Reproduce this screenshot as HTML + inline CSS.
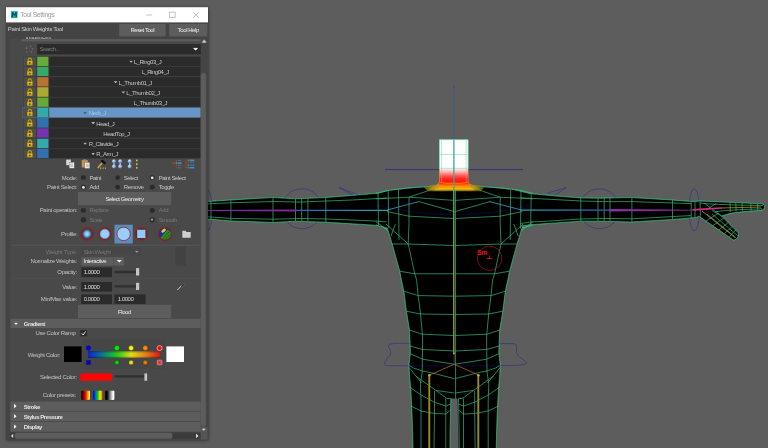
<!DOCTYPE html>
<html>
<head>
<meta charset="utf-8">
<title>Tool Settings</title>
<style>
*{box-sizing:border-box;margin:0;padding:0}
html,body{width:768px;height:448px;overflow:hidden;background:#5d5d5d}
body{position:relative;font-family:"Liberation Sans",sans-serif;font-size:6px;letter-spacing:-.45px;color:#c4c4c4;line-height:1}
.a{position:absolute}
#vp{position:absolute;left:0;top:0;width:768px;height:448px}
#win{overflow:hidden;position:absolute;left:6px;top:7px;width:201.8px;height:432.6px;background:#444;box-shadow:0 0 3px .5px rgba(0,0,0,.5)}
#title{position:absolute;left:0;top:0;width:201.8px;height:15.4px;background:#fff}
#title .t{position:absolute;left:14.2px;top:4.7px;font-size:6.9px;letter-spacing:-.42px;color:#9c9c9c;white-space:nowrap}
.btn{position:absolute;background:#5d5d5d;color:#eee;text-align:center;white-space:nowrap}
.lbl{margin-top:-.4px;position:absolute;white-space:nowrap;text-align:right;color:#c4c4c4;letter-spacing:-.3px}
.txt{margin-top:-.4px;position:absolute;white-space:nowrap;color:#c6c6c6}
.dis{color:#777}
.fld{position:absolute;background:#2b2b2b;color:#ddd;white-space:nowrap;padding-left:2.4px}
.row{position:absolute;left:23.25px;width:177.25px;height:9.3px}
.row .lk{position:absolute;left:.2px;top:0;width:12.5px;height:9.3px;background:#4d4d4d}
.row .sw{position:absolute;left:13.75px;top:0;width:11.5px;height:9.3px}
.row .nm{position:absolute;left:25.75px;top:0;width:151.5px;height:9.3px;background:#2b2b2b}
.row .tx{position:absolute;top:2.3px;white-space:nowrap;color:#c6c6c6}
.row.sel .nm{background:#6795c5}.row.sel{outline:.7px solid #6b9bd0;outline-offset:.1px}.row.sel .tx{color:#a9c2e4}.row.sel .tri{background:#47607e}
.tri{position:absolute;width:4px;height:2.4px;background:#b4b4b4;clip-path:polygon(0 0,100% 0,50% 100%)}
.rad{position:absolute;width:5px;height:5px;margin:-.2px 0 0 -.2px;border-radius:50%;background:#2b2b2b}
.rad.on::after,.rad.half::after{content:"";position:absolute;left:1.1px;top:1.1px;width:2.8px;height:2.8px;border-radius:50%;background:#ececec}.rad.half::after{background:#9a9a9a;left:1.3px;top:1.3px;width:2.4px;height:2.4px}
.hdr{position:absolute;left:10.3px;width:190.4px;background:#5d5d5d;color:#e4e4e4;font-weight:bold}
.hdr span{position:absolute;left:13.5px;top:1.9px;white-space:nowrap}
.groove{position:absolute;height:2.6px;background:#303030;border-radius:1px}
.hand{position:absolute;width:3.2px;height:7.4px;background:#c4c4c4;border-radius:.5px}
</style>
</head>
<body>
<svg id="vp" viewBox="0 0 768 448">
<defs>
<linearGradient id="neck" x1="0" x2="0" y1="139.75" y2="182" gradientUnits="userSpaceOnUse"><stop offset="0" stop-color="#fff"/><stop offset=".66" stop-color="#fff"/><stop offset=".76" stop-color="#ffb4b4"/><stop offset=".85" stop-color="#ff5a5a"/><stop offset=".93" stop-color="#ff2020"/><stop offset="1" stop-color="#ff1a08"/></linearGradient>
<linearGradient id="spine" x1="0" x2="0" y1="190" y2="353" gradientUnits="userSpaceOnUse"><stop offset="0" stop-color="#4cb070"/><stop offset=".2" stop-color="#86ac30"/><stop offset=".5" stop-color="#a8a224"/><stop offset="1" stop-color="#a89c24"/></linearGradient>
<linearGradient id="fan" x1="0" x2="0" y1="181.5" y2="192" gradientUnits="userSpaceOnUse"><stop offset="0" stop-color="#ff1a08"/><stop offset=".25" stop-color="#ff4a00"/><stop offset=".5" stop-color="#ff9000"/><stop offset=".72" stop-color="#f0c000"/><stop offset=".9" stop-color="#806400"/><stop offset="1" stop-color="#000"/></linearGradient>
<linearGradient id="fanh" x1="424" x2="484" y1="0" y2="0" gradientUnits="userSpaceOnUse"><stop offset="0" stop-color="#000" stop-opacity=".65"/><stop offset=".2" stop-color="#000" stop-opacity="0"/><stop offset=".8" stop-color="#000" stop-opacity="0"/><stop offset="1" stop-color="#000" stop-opacity=".65"/></linearGradient>
<linearGradient id="armL" x1="296" x2="388" y1="0" y2="0" gradientUnits="userSpaceOnUse"><stop offset="0" stop-color="#3060c0"/><stop offset="1" stop-color="#30a0a8"/></linearGradient>
<linearGradient id="armR" x1="609" x2="521" y1="0" y2="0" gradientUnits="userSpaceOnUse"><stop offset="0" stop-color="#3060c0"/><stop offset="1" stop-color="#30a0a8"/></linearGradient>
</defs>
<!--FIGSTART-->
<path d="M376.0 225.0 L387.2 228.0 L392.2 244.0 L399.8 271.5 L401.4 280.0 L403.9 291.2 L406.4 311.2 L409.5 330.0 L410.4 352.0 L409.0 365.0 L409.5 376.0 L410.8 388.5 L412.0 413.5 L412.6 432.0 L413.0 448.0 M533.2 225.0 L522.0 228.0 L517.0 244.0 L509.5 271.5 L507.8 280.0 L505.3 291.2 L502.8 311.2 L499.7 330.0 L498.8 352.0 L500.2 365.0 L499.7 376.0 L498.5 388.5 L497.2 413.5 L496.6 432.0 L496.2 448.0 M409.0 197.2 L409.0 224.0 L408.2 244.0 L414.8 274.0 L416.6 280.0 L418.2 295.6 L420.5 314.0 L422.6 336.0 L422.5 349.0 L422.2 372.0 L420.4 384.0 L421.0 400.0 L421.0 448.0 M500.2 197.2 L500.2 224.0 L501.0 244.0 L494.5 274.0 L492.6 280.0 L491.0 295.6 L488.7 314.0 L486.6 336.0 L486.7 349.0 L487.0 372.0 L488.8 384.0 L488.2 400.0 L488.2 448.0 M392.2 244.0 L408.2 244.0 L454.2 245.5 M517.0 244.0 L501.0 244.0 L455.0 245.5 M399.8 271.2 L414.8 273.8 L454.2 273.8 M509.5 271.2 L494.5 273.8 L455.0 273.8 M403.9 291.2 L418.2 295.6 L454.2 296.2 M505.3 291.2 L491.0 295.6 L455.0 296.2 M406.4 311.2 L420.5 314.0 L454.2 314.5 M502.8 311.2 L488.7 314.0 L455.0 314.5 M409.5 330.0 L422.0 334.2 L454.2 335.5 M499.7 330.0 L487.2 334.2 L455.0 335.5 M410.0 346.0 L422.5 349.5 L454.2 351.0 M499.2 346.0 L486.7 349.5 L455.0 351.0 M410.0 353.6 L422.5 359.2 L454.2 364.2 M499.2 353.6 L486.7 359.2 L455.0 364.2 M409.5 365.5 L413.5 368.0 L422.2 371.0 L429.8 372.4 L454.2 378.6 M499.7 365.5 L495.7 368.0 L487.0 371.0 L479.5 372.4 L455.0 378.6 M409.5 368.0 L421.6 383.0 M499.7 368.0 L487.6 383.0 M386.0 224.0 L408.2 244.0 M523.2 224.0 L501.0 244.0 M395.4 224.0 L391.0 236.0 M513.8 224.0 L518.2 236.0 M376.0 198.8 L409.0 197.2 L454.2 200.4 M533.2 198.8 L500.2 197.2 L455.0 200.4 M409.0 197.2 L438.5 187.2 M500.2 197.2 L470.7 187.2 M419.0 201.6 L454.2 211.6 M490.2 201.6 L455.0 211.6 M387.0 211.6 L409.0 216.2 L454.2 218.5 M522.2 211.6 L500.2 216.2 L455.0 218.5 M376.0 221.6 L388.5 231.0 M533.2 221.6 L520.7 231.0 M378.0 193.3 L378.5 225.2 M531.2 193.3 L530.7 225.2 M388.2 190.6 L388.8 228.5 M521.0 190.6 L520.5 228.5 M398.5 189.4 L399.0 240.0 M510.7 189.4 L510.2 240.0 M376.0 193.5 L388.5 190.4 L408.5 187.9 L423.5 187.0 L438.0 185.4 M533.2 193.5 L520.7 190.4 L500.7 187.9 L485.7 187.0 L471.2 185.4 M409.5 387.0 L421.0 395.0 L434.0 402.0 L445.8 406.0 L450.8 404.0 M499.7 387.0 L488.2 395.0 L475.2 402.0 L463.5 406.0 L458.5 404.0 M410.8 406.0 L421.0 411.0 L434.5 413.5 L445.8 414.0 L450.5 410.0 M498.5 406.0 L488.2 411.0 L474.7 413.5 L463.5 414.0 L458.7 410.0 M415.8 376.0 L421.0 379.8 L435.8 390.4 L454.2 393.0 M493.5 376.0 L488.2 379.8 L473.5 390.4 L455.0 393.0 M435.8 390.4 L447.0 398.5 L450.8 398.5 M473.5 390.4 L462.2 398.5 L458.5 398.5 M434.5 391.0 L434.5 413.5 L434.0 448.0 M474.7 391.0 L474.7 413.5 L475.2 448.0 M445.8 398.5 L445.8 448.0 M463.5 398.5 L463.5 448.0 M450.8 398.5 L450.1 432.0 L450.0 448.0 M458.5 398.5 L459.1 432.0 L459.2 448.0 M455.5 190.0 L455.6 398.5 M208.0 201.5 L230.5 200.0 L273.0 197.5 L295.5 198.8 L326.0 197.5 L352.2 195.4 L377.9 193.2 L388.5 190.4 M208.0 219.0 L230.5 220.9 L273.0 222.5 L295.5 221.2 L326.0 222.2 L352.2 223.8 L377.9 225.4 M208.0 203.8 L230.5 202.8 L273.0 201.5 L295.5 202.0 L301.6 202.0 L326.0 201.0 L352.2 200.0 L377.9 198.5 L386.6 198.0 M208.0 216.8 L230.5 218.4 L273.0 219.2 L295.5 218.6 L301.6 218.5 L326.0 219.0 L352.2 220.0 L377.9 221.2 L386.6 222.0 M211.0 201.3 L211.0 219.3 M230.9 200.0 L230.9 220.9 M273.0 197.5 L273.0 222.5 M295.5 198.8 L295.5 221.2 M301.7 198.5 L301.7 221.5 M307.9 198.2 L307.9 221.7 M325.8 197.5 L325.8 222.2 M512.0 189.1 L519.5 191.0 L529.5 193.5 L555.8 196.0 L580.8 197.9 L600.0 198.2 L631.2 197.5 L671.9 200.0 L690.6 201.4 L696.0 201.5 M521.4 226.0 L529.5 224.8 L555.8 222.9 L580.8 221.2 L600.0 221.2 L631.2 222.0 L671.9 219.5 L690.6 217.9 L696.0 217.5 M520.8 198.0 L529.5 198.2 L555.8 199.6 L580.8 201.0 L604.0 201.6 L632.0 201.6 L672.0 202.9 L691.0 203.6 M520.8 223.5 L529.5 222.2 L555.8 220.6 L580.8 219.0 L604.0 218.5 L632.0 218.8 L672.0 216.6 L691.0 215.6 M580.8 197.9 L580.8 221.2 M598.0 198.2 L598.0 221.2 M604.2 198.1 L604.2 221.4 M610.0 198.0 L610.0 221.5 M631.9 197.5 L631.9 222.0 M672.5 200.0 L672.5 219.4 M691.2 201.4 L691.2 217.9 M695.0 201.5 L695.0 217.6 M696.0 201.5 L699.5 201.0 L728.0 202.2 L761.5 203.8 L763.6 204.4 L764.4 205.6 L764.4 208.0 L763.4 209.6 L761.0 210.3 L744.0 211.6 L734.8 212.6 L728.5 213.8 L721.6 216.0 M700.0 203.0 L709.5 204.0 L735.0 205.0 L763.0 205.6 M716.0 211.6 L726.0 210.6 L737.0 209.8 L762.0 208.8 M696.0 217.5 L699.0 216.2 L733.4 240.0 L736.0 239.4 L738.0 237.0 L738.4 233.0 L721.6 216.0 L712.0 210.5 M707.0 214.0 L736.0 237.8 M712.0 214.0 L737.6 235.6 M700.0 201.0 L700.4 216.6 M730.0 202.3 L730.4 211.9 M735.8 202.6 L736.1 211.6 M742.0 202.9 L742.4 211.3 M750.8 203.3 L751.1 210.9 M757.5 203.6 L757.9 210.5 M705.9 221.0 L718.9 213.0 M712.7 225.8 L723.8 218.0 M718.9 230.0 L728.2 222.5 M724.3 233.8 L732.1 226.5 M729.1 237.2 L735.5 230.0 M704.0 203.0 L721.6 216.0 M706.0 210.0 L716.0 203.5" fill="none" stroke="#35b478" stroke-width=".72" stroke-linejoin="round"/>
<circle cx="302" cy="208.75" r="20" stroke="#2e2e86" stroke-width=".6" fill="none"/>
<circle cx="599.5" cy="208.75" r="20" stroke="#2e2e86" stroke-width=".6" fill="none"/>
<ellipse cx="694.25" cy="209.75" rx="5.25" ry="21" stroke="#2e2e86" stroke-width=".6" fill="none"/>
<ellipse cx="207" cy="210.5" rx="5.25" ry="21" stroke="#2e2e86" stroke-width=".6" fill="none"/>
<path d="M409.8 343.7 C402 343 396 343.2 391.4 343.9 C388.6 344.3 388 345.4 388.6 347 C389.6 349.6 391.6 351 390.6 353.8 C389.4 357 385.2 359.6 384.7 363 C384.4 365 385.6 365.7 387.6 365.7 L409.8 365.9" stroke="#2e2e86" stroke-width=".6" fill="none"/>
<path d="M498.2 343.6 L513 343.6 C515.4 343.6 516.5 344.4 516.5 346.4 L516.5 352 C516.6 354 517.6 355.2 519.4 356.8 C522 359 525.2 360.8 526.3 362.4 C527 363.6 526 364.4 524 364.6 C521.6 364.9 519 365.3 516 365.4 L498.4 365.6" stroke="#2e2e86" stroke-width=".6" fill="none"/>
<path d="M339 187.5 L353.5 195.6 M339 187.5 L359 195.2" stroke="#2e2e86" stroke-width=".6" fill="none"/>
<path d="M566.4 187.5 L547 193.4 M566.4 187.5 L554.5 195.6" stroke="#2e2e86" stroke-width=".6" fill="none"/>
<path d="M385 169.6 L523 169.6" stroke="#2a2a80" stroke-width=".8"/>
<path d="M454 86 L454 140" stroke="#3a5aa0" stroke-width=".7"/>
<circle cx="454" cy="86.5" r=".8" fill="#7030a0"/>
<polygon points="208.0,201.5 230.5,200.0 273.0,197.5 295.5,198.8 326.0,197.5 352.2,195.4 377.9,193.2 388.5,190.4 400.0,189.5 423.5,187.0 438.0,185.4 440.0,183.0 468.5,183.0 470.5,185.4 485.0,187.0 508.5,189.5 512.0,189.1 519.5,191.0 529.5,193.5 555.8,196.0 580.8,197.9 600.0,198.2 631.2,197.5 671.9,200.0 690.6,201.4 696.0,201.5 699.5,201.0 728.0,202.2 761.5,203.8 763.6,204.4 764.4,205.6 764.4,208.0 763.4,209.6 761.0,210.3 744.0,211.6 734.8,212.6 728.5,213.8 721.6,216.0 738.4,233.0 738.0,237.0 736.0,239.4 733.4,240.0 699.0,216.2 696.0,217.5 690.6,217.9 671.9,219.5 631.2,222.0 600.0,221.2 580.8,221.2 555.8,222.9 529.5,224.8 521.4,226.0 522.0,228.0 517.0,244.0 509.5,271.5 507.8,280.0 505.3,291.2 502.8,311.2 499.7,330.0 498.8,352.0 500.2,365.0 499.7,376.0 498.5,388.5 497.2,413.5 496.6,432.0 496.2,448.0 458.4,448.0 458.2,432.0 457.6,398.5 450.8,398.5 450.1,432.0 450.0,448.0 413.0,448.0 412.6,432.0 412.0,413.5 410.8,388.5 409.5,376.0 409.0,365.0 410.4,352.0 409.5,330.0 406.4,311.2 403.9,291.2 401.4,280.0 399.8,271.5 392.2,244.0 387.2,228.0 377.9,225.4 352.2,223.8 326.0,222.2 295.5,221.2 273.0,222.5 230.5,220.9 208.0,219.0" fill="#000"/>
<path d="M409.8 365.8 H499.4" stroke="#0e0e58" stroke-width=".7"/>
<path d="M376 205 Q415 214 454.6 215 Q494 214 533 205" stroke="#0c0c4c" stroke-width=".7" fill="none"/>
<path d="M424.1 187.25 L437.9 184.1 L439.75 181.5 H468.1 L470 184.1 L484 187.25 L480.4 191.6 L454.2 191.4 L428.2 191.6 Z" fill="url(#fan)"/>
<path d="M424.1 187.25 L437.9 184.1 L439.75 181.5 H468.1 L470 184.1 L484 187.25 L480.4 191.6 L454.2 191.4 L428.2 191.6 Z" fill="url(#fanh)"/>
<path d="M439.5 139.75 H468.1 V182 H439.5 Z" fill="url(#neck)"/>
<path d="M376.0 225.0 L387.2 228.0 L392.2 244.0 L399.8 271.5 L401.4 280.0 L403.9 291.2 L406.4 311.2 L409.5 330.0 L410.4 352.0 L409.0 365.0 L409.5 376.0 L410.8 388.5 L412.0 413.5 L412.6 432.0 L413.0 448.0 M533.2 225.0 L522.0 228.0 L517.0 244.0 L509.5 271.5 L507.8 280.0 L505.3 291.2 L502.8 311.2 L499.7 330.0 L498.8 352.0 L500.2 365.0 L499.7 376.0 L498.5 388.5 L497.2 413.5 L496.6 432.0 L496.2 448.0 M409.0 197.2 L409.0 224.0 L408.2 244.0 L414.8 274.0 L416.6 280.0 L418.2 295.6 L420.5 314.0 L422.6 336.0 L422.5 349.0 L422.2 372.0 L420.4 384.0 L421.0 400.0 L421.0 448.0 M500.2 197.2 L500.2 224.0 L501.0 244.0 L494.5 274.0 L492.6 280.0 L491.0 295.6 L488.7 314.0 L486.6 336.0 L486.7 349.0 L487.0 372.0 L488.8 384.0 L488.2 400.0 L488.2 448.0 M392.2 244.0 L408.2 244.0 L454.2 245.5 M517.0 244.0 L501.0 244.0 L455.0 245.5 M399.8 271.2 L414.8 273.8 L454.2 273.8 M509.5 271.2 L494.5 273.8 L455.0 273.8 M403.9 291.2 L418.2 295.6 L454.2 296.2 M505.3 291.2 L491.0 295.6 L455.0 296.2 M406.4 311.2 L420.5 314.0 L454.2 314.5 M502.8 311.2 L488.7 314.0 L455.0 314.5 M409.5 330.0 L422.0 334.2 L454.2 335.5 M499.7 330.0 L487.2 334.2 L455.0 335.5 M410.0 346.0 L422.5 349.5 L454.2 351.0 M499.2 346.0 L486.7 349.5 L455.0 351.0 M410.0 353.6 L422.5 359.2 L454.2 364.2 M499.2 353.6 L486.7 359.2 L455.0 364.2 M409.5 365.5 L413.5 368.0 L422.2 371.0 L429.8 372.4 L454.2 378.6 M499.7 365.5 L495.7 368.0 L487.0 371.0 L479.5 372.4 L455.0 378.6 M409.5 368.0 L421.6 383.0 M499.7 368.0 L487.6 383.0 M386.0 224.0 L408.2 244.0 M523.2 224.0 L501.0 244.0 M395.4 224.0 L391.0 236.0 M513.8 224.0 L518.2 236.0 M376.0 198.8 L409.0 197.2 L454.2 200.4 M533.2 198.8 L500.2 197.2 L455.0 200.4 M409.0 197.2 L438.5 187.2 M500.2 197.2 L470.7 187.2 M419.0 201.6 L454.2 211.6 M490.2 201.6 L455.0 211.6 M387.0 211.6 L409.0 216.2 L454.2 218.5 M522.2 211.6 L500.2 216.2 L455.0 218.5 M376.0 221.6 L388.5 231.0 M533.2 221.6 L520.7 231.0 M378.0 193.3 L378.5 225.2 M531.2 193.3 L530.7 225.2 M388.2 190.6 L388.8 228.5 M521.0 190.6 L520.5 228.5 M398.5 189.4 L399.0 240.0 M510.7 189.4 L510.2 240.0 M376.0 193.5 L388.5 190.4 L408.5 187.9 L423.5 187.0 L438.0 185.4 M533.2 193.5 L520.7 190.4 L500.7 187.9 L485.7 187.0 L471.2 185.4 M409.5 387.0 L421.0 395.0 L434.0 402.0 L445.8 406.0 L450.8 404.0 M499.7 387.0 L488.2 395.0 L475.2 402.0 L463.5 406.0 L458.5 404.0 M410.8 406.0 L421.0 411.0 L434.5 413.5 L445.8 414.0 L450.5 410.0 M498.5 406.0 L488.2 411.0 L474.7 413.5 L463.5 414.0 L458.7 410.0 M415.8 376.0 L421.0 379.8 L435.8 390.4 L454.2 393.0 M493.5 376.0 L488.2 379.8 L473.5 390.4 L455.0 393.0 M435.8 390.4 L447.0 398.5 L450.8 398.5 M473.5 390.4 L462.2 398.5 L458.5 398.5 M434.5 391.0 L434.5 413.5 L434.0 448.0 M474.7 391.0 L474.7 413.5 L475.2 448.0 M445.8 398.5 L445.8 448.0 M463.5 398.5 L463.5 448.0 M450.8 398.5 L450.1 432.0 L450.0 448.0 M458.5 398.5 L459.1 432.0 L459.2 448.0 M455.5 190.0 L455.6 398.5 M208.0 201.5 L230.5 200.0 L273.0 197.5 L295.5 198.8 L326.0 197.5 L352.2 195.4 L377.9 193.2 L388.5 190.4 M208.0 219.0 L230.5 220.9 L273.0 222.5 L295.5 221.2 L326.0 222.2 L352.2 223.8 L377.9 225.4 M208.0 203.8 L230.5 202.8 L273.0 201.5 L295.5 202.0 L301.6 202.0 L326.0 201.0 L352.2 200.0 L377.9 198.5 L386.6 198.0 M208.0 216.8 L230.5 218.4 L273.0 219.2 L295.5 218.6 L301.6 218.5 L326.0 219.0 L352.2 220.0 L377.9 221.2 L386.6 222.0 M211.0 201.3 L211.0 219.3 M230.9 200.0 L230.9 220.9 M273.0 197.5 L273.0 222.5 M295.5 198.8 L295.5 221.2 M301.7 198.5 L301.7 221.5 M307.9 198.2 L307.9 221.7 M325.8 197.5 L325.8 222.2 M512.0 189.1 L519.5 191.0 L529.5 193.5 L555.8 196.0 L580.8 197.9 L600.0 198.2 L631.2 197.5 L671.9 200.0 L690.6 201.4 L696.0 201.5 M521.4 226.0 L529.5 224.8 L555.8 222.9 L580.8 221.2 L600.0 221.2 L631.2 222.0 L671.9 219.5 L690.6 217.9 L696.0 217.5 M520.8 198.0 L529.5 198.2 L555.8 199.6 L580.8 201.0 L604.0 201.6 L632.0 201.6 L672.0 202.9 L691.0 203.6 M520.8 223.5 L529.5 222.2 L555.8 220.6 L580.8 219.0 L604.0 218.5 L632.0 218.8 L672.0 216.6 L691.0 215.6 M580.8 197.9 L580.8 221.2 M598.0 198.2 L598.0 221.2 M604.2 198.1 L604.2 221.4 M610.0 198.0 L610.0 221.5 M631.9 197.5 L631.9 222.0 M672.5 200.0 L672.5 219.4 M691.2 201.4 L691.2 217.9 M695.0 201.5 L695.0 217.6 M696.0 201.5 L699.5 201.0 L728.0 202.2 L761.5 203.8 L763.6 204.4 L764.4 205.6 L764.4 208.0 L763.4 209.6 L761.0 210.3 L744.0 211.6 L734.8 212.6 L728.5 213.8 L721.6 216.0 M700.0 203.0 L709.5 204.0 L735.0 205.0 L763.0 205.6 M716.0 211.6 L726.0 210.6 L737.0 209.8 L762.0 208.8 M696.0 217.5 L699.0 216.2 L733.4 240.0 L736.0 239.4 L738.0 237.0 L738.4 233.0 L721.6 216.0 L712.0 210.5 M707.0 214.0 L736.0 237.8 M712.0 214.0 L737.6 235.6 M700.0 201.0 L700.4 216.6 M730.0 202.3 L730.4 211.9 M735.8 202.6 L736.1 211.6 M742.0 202.9 L742.4 211.3 M750.8 203.3 L751.1 210.9 M757.5 203.6 L757.9 210.5 M705.9 221.0 L718.9 213.0 M712.7 225.8 L723.8 218.0 M718.9 230.0 L728.2 222.5 M724.3 233.8 L732.1 226.5 M729.1 237.2 L735.5 230.0 M704.0 203.0 L721.6 216.0 M706.0 210.0 L716.0 203.5" fill="none" stroke="#35b478" stroke-width=".72" stroke-linejoin="round"/>
<path d="M439.5 139.75 H468.1 V169 M439.5 139.75 V169 M441.6 139.75 V169 M466.1 139.75 V169 M439.5 154.5 H468.1 M439.5 168.3 H468.1" fill="none" stroke="#86e8c0" stroke-width=".7"/>
<path d="M439.5 169 V182 L437.2 184.8 M468.1 169 V182 L470.4 184.8 M441.6 169 V182.6 M466.1 169 V182.6 M439.5 182 Q447 184.4 454 183.2 Q461 184.4 468.1 182 M437.2 184.8 Q447 187.4 454 186 Q461 187.4 470.4 184.8" fill="none" stroke="#ffa040" stroke-width=".6" opacity=".75"/>
<path d="M453.9 139.75 V190" stroke="#3aa8a0" stroke-width="1.3"/>
<path d="M208 210.1 L296.8 209.5 V211.6 L208 210.9 Z" fill="#7c2c9c"/>
<path d="M296.8 210.4 H388" stroke="url(#armL)" stroke-width="1.2"/>
<path d="M387 210 L419 201.6" stroke="#3a90a8" stroke-width=".9"/>
<path d="M521.5 210 L489.5 201.6" stroke="#3a90a8" stroke-width=".9"/>
<path d="M520 210.1 H609" stroke="url(#armR)" stroke-width="1.2"/>
<path d="M691 209.8 L609 209 V211.4 L691 210.5 Z" fill="#8a2fa4"/>
<path d="M693 209.9 L721 208" stroke="#d8308a" stroke-width="1.6" stroke-linecap="round"/>
<path d="M721 208 L761 207" stroke="#e0a020" stroke-width=".7"/>
<path d="M702 211 L735 237.5" stroke="#e0a020" stroke-width=".7"/>
<path d="M453.8 190 V353" stroke="url(#spine)" stroke-width="1.35"/>
<circle cx="454" cy="353.4" r="1" fill="#b8b030"/>
<path d="M454.1 354 V364.25" stroke="#7a3a18" stroke-width=".8"/>
<path d="M429.75 375 L454.1 364.25 L478.5 375" stroke="#c87028" stroke-width=".7" fill="none"/>
<path d="M429.3 375 V448 M478.3 375 V448" stroke="#988c26" stroke-width="1.9"/>
<circle cx="429.4" cy="375.3" r="1.2" fill="#c0b030"/><circle cx="478.4" cy="375.3" r="1.2" fill="#c0b030"/>
<circle cx="489.6" cy="258.2" r="12.2" fill="none" stroke="#b81414" stroke-width=".7"/>
<path d="M489.6 255.3 V258.4 M486.8 258.5 H492.4" stroke="#e81010" stroke-width=".9" fill="none"/>
<text x="477.1" y="255.1" font-family="Liberation Sans,sans-serif" font-weight="bold" font-size="7.6" textLength="10" lengthAdjust="spacingAndGlyphs" fill="#e01818">Sm</text>
<!--FIGEND-->
</svg>
<div id="win">
<div class="a" id="pgo" style="left:-6px;top:-7px;width:1920px;height:1120px;transform:scale(.4);transform-origin:0 0;filter:saturate(1.0001)"><div class="a" id="pg" style="left:0;top:0;width:768px;height:448px;zoom:2.5">
<div id="title" style="left:6px;top:7px"><span class="t">Tool Settings</span></div>
<svg class="a" style="left:10.6px;top:10.8px;width:7px;height:7.6px" viewBox="0 0 28 30"><rect x="0" y="0" width="28" height="30" rx="2" fill="#2aa5a5"/><rect x="0" y="0" width="28" height="14" rx="2" fill="#37c0c0"/><path d="M4 25V5h5l5 9 5-9h5v20h-5V14l-5 8-5-8v11z" fill="#0d4b55"/></svg>
<svg class="a" style="left:140px;top:7px;width:68px;height:15.4px" viewBox="0 0 68 15.4"><g stroke="#999" stroke-width=".6" fill="none"><path d="M6.2 7.8h6"/><rect x="29.7" y="4.9" width="5.4" height="5.4"/><path d="M53.2 4.9l5.6 5.6M58.8 4.9l-5.6 5.6"/></g></svg>
<div class="txt" style="left:7.8px;top:26.3px;color:#ccc;letter-spacing:-.33px">Paint Skin Weights Tool</div>
<div class="btn" style="left:119px;top:23.6px;width:46.5px;height:12.6px;line-height:12.8px">Reset Tool</div>
<div class="btn" style="left:169px;top:23.6px;width:38.6px;height:12.6px;line-height:12.8px">Tool Help</div>
<!-- scroll area -->
<div class="a" style="left:10.3px;top:38.6px;width:190.4px;height:393.4px;background:#494949"></div>
<div class="a" style="left:21px;top:39px;width:179.6px;height:2.6px;background:#5d5d5d"></div>
<div class="a" style="left:25.6px;top:37.2px;height:3.4px;overflow:hidden;width:40px"><div class="a" style="top:-3.2px;left:0;font-weight:bold;color:#aaa">Influences</div></div>
<!-- search -->
<svg class="a" style="left:26px;top:45.6px;width:6.8px;height:7px" viewBox="0 0 14 14"><rect x="1" y="1" width="12" height="12" fill="none" stroke="#8a8a8a" stroke-width="1.6" stroke-dasharray="3.2 5.6" stroke-dashoffset="1.6"/></svg>
<div class="fld" style="left:37px;top:44px;width:163.6px;height:10.2px;line-height:10.6px;color:#7a7a7a">Search...</div>
<div class="tri" style="left:192.6px;top:47.6px;width:6px;height:3.2px;background:#eee"></div>
<!-- influence list -->
<div class="a" style="left:23.25px;top:56.2px;width:177.25px;height:102.4px;background:#3c3c3c"></div>
<div class="row" style="top:56.60px"><div class="lk"><svg class="a" style="left:2.9px;top:.3px;width:6.9px;height:8.9px" viewBox="0 0 14 18"><path d="M3.6 9V6a3.4 3.4 0 0 1 6.8 0V9" fill="none" stroke="#7a6810" stroke-width="3.2"/><path d="M3.6 9V6a3.4 3.4 0 0 1 6.8 0V9" fill="none" stroke="#c8a61a" stroke-width="1.9"/><rect x="1.2" y="8" width="11.6" height="8.8" rx="1.4" fill="#c8a61a" stroke="#6e5c0c" stroke-width=".9"/><rect x="2.2" y="9" width="9.6" height="2.2" fill="#dcc040"/><circle cx="7" cy="12" r="1.4" fill="#4a3c06"/><rect x="6.3" y="12" width="1.4" height="3" fill="#4a3c06"/></svg></div><div class="sw" style="background:#6aaa3a"></div><div class="nm"></div><div class="tri" style="left:105.85px;top:3.9px"></div><div class="tx" style="left:110.45px">L_Ring03_J</div></div>
<div class="row" style="top:66.85px"><div class="lk"><svg class="a" style="left:2.9px;top:.3px;width:6.9px;height:8.9px" viewBox="0 0 14 18"><path d="M3.6 9V6a3.4 3.4 0 0 1 6.8 0V9" fill="none" stroke="#7a6810" stroke-width="3.2"/><path d="M3.6 9V6a3.4 3.4 0 0 1 6.8 0V9" fill="none" stroke="#c8a61a" stroke-width="1.9"/><rect x="1.2" y="8" width="11.6" height="8.8" rx="1.4" fill="#c8a61a" stroke="#6e5c0c" stroke-width=".9"/><rect x="2.2" y="9" width="9.6" height="2.2" fill="#dcc040"/><circle cx="7" cy="12" r="1.4" fill="#4a3c06"/><rect x="6.3" y="12" width="1.4" height="3" fill="#4a3c06"/></svg></div><div class="sw" style="background:#33aa66"></div><div class="nm"></div><div class="tx" style="left:118.15px">L_Ring04_J</div></div>
<div class="row" style="top:77.10px"><div class="lk"><svg class="a" style="left:2.9px;top:.3px;width:6.9px;height:8.9px" viewBox="0 0 14 18"><path d="M3.6 9V6a3.4 3.4 0 0 1 6.8 0V9" fill="none" stroke="#7a6810" stroke-width="3.2"/><path d="M3.6 9V6a3.4 3.4 0 0 1 6.8 0V9" fill="none" stroke="#c8a61a" stroke-width="1.9"/><rect x="1.2" y="8" width="11.6" height="8.8" rx="1.4" fill="#c8a61a" stroke="#6e5c0c" stroke-width=".9"/><rect x="2.2" y="9" width="9.6" height="2.2" fill="#dcc040"/><circle cx="7" cy="12" r="1.4" fill="#4a3c06"/><rect x="6.3" y="12" width="1.4" height="3" fill="#4a3c06"/></svg></div><div class="sw" style="background:#b87333"></div><div class="nm"></div><div class="tri" style="left:90.35px;top:3.9px"></div><div class="tx" style="left:95.25px">L_Thumb01_J</div></div>
<div class="row" style="top:87.35px"><div class="lk"><svg class="a" style="left:2.9px;top:.3px;width:6.9px;height:8.9px" viewBox="0 0 14 18"><path d="M3.6 9V6a3.4 3.4 0 0 1 6.8 0V9" fill="none" stroke="#7a6810" stroke-width="3.2"/><path d="M3.6 9V6a3.4 3.4 0 0 1 6.8 0V9" fill="none" stroke="#c8a61a" stroke-width="1.9"/><rect x="1.2" y="8" width="11.6" height="8.8" rx="1.4" fill="#c8a61a" stroke="#6e5c0c" stroke-width=".9"/><rect x="2.2" y="9" width="9.6" height="2.2" fill="#dcc040"/><circle cx="7" cy="12" r="1.4" fill="#4a3c06"/><rect x="6.3" y="12" width="1.4" height="3" fill="#4a3c06"/></svg></div><div class="sw" style="background:#aaaa33"></div><div class="nm"></div><div class="tri" style="left:98.05px;top:3.9px"></div><div class="tx" style="left:103.05px">L_Thumb02_J</div></div>
<div class="row" style="top:97.60px"><div class="lk"><svg class="a" style="left:2.9px;top:.3px;width:6.9px;height:8.9px" viewBox="0 0 14 18"><path d="M3.6 9V6a3.4 3.4 0 0 1 6.8 0V9" fill="none" stroke="#7a6810" stroke-width="3.2"/><path d="M3.6 9V6a3.4 3.4 0 0 1 6.8 0V9" fill="none" stroke="#c8a61a" stroke-width="1.9"/><rect x="1.2" y="8" width="11.6" height="8.8" rx="1.4" fill="#c8a61a" stroke="#6e5c0c" stroke-width=".9"/><rect x="2.2" y="9" width="9.6" height="2.2" fill="#dcc040"/><circle cx="7" cy="12" r="1.4" fill="#4a3c06"/><rect x="6.3" y="12" width="1.4" height="3" fill="#4a3c06"/></svg></div><div class="sw" style="background:#66aa33"></div><div class="nm"></div><div class="tx" style="left:110.45px">L_Thumb03_J</div></div>
<div class="row sel" style="top:107.85px"><div class="lk"><svg class="a" style="left:2.9px;top:.3px;width:6.9px;height:8.9px" viewBox="0 0 14 18"><path d="M3.6 9V6a3.4 3.4 0 0 1 6.8 0V9" fill="none" stroke="#7a6810" stroke-width="3.2"/><path d="M3.6 9V6a3.4 3.4 0 0 1 6.8 0V9" fill="none" stroke="#c8a61a" stroke-width="1.9"/><rect x="1.2" y="8" width="11.6" height="8.8" rx="1.4" fill="#c8a61a" stroke="#6e5c0c" stroke-width=".9"/><rect x="2.2" y="9" width="9.6" height="2.2" fill="#dcc040"/><circle cx="7" cy="12" r="1.4" fill="#4a3c06"/><rect x="6.3" y="12" width="1.4" height="3" fill="#4a3c06"/></svg></div><div class="sw" style="background:#33aaaa"></div><div class="nm"></div><div class="tri" style="left:59.85px;top:3.9px"></div><div class="tx" style="left:65.55px">Neck_J</div></div>
<div class="row" style="top:118.10px"><div class="lk"><svg class="a" style="left:2.9px;top:.3px;width:6.9px;height:8.9px" viewBox="0 0 14 18"><path d="M3.6 9V6a3.4 3.4 0 0 1 6.8 0V9" fill="none" stroke="#7a6810" stroke-width="3.2"/><path d="M3.6 9V6a3.4 3.4 0 0 1 6.8 0V9" fill="none" stroke="#c8a61a" stroke-width="1.9"/><rect x="1.2" y="8" width="11.6" height="8.8" rx="1.4" fill="#c8a61a" stroke="#6e5c0c" stroke-width=".9"/><rect x="2.2" y="9" width="9.6" height="2.2" fill="#dcc040"/><circle cx="7" cy="12" r="1.4" fill="#4a3c06"/><rect x="6.3" y="12" width="1.4" height="3" fill="#4a3c06"/></svg></div><div class="sw" style="background:#336fb3"></div><div class="nm"></div><div class="tri" style="left:67.85px;top:3.9px"></div><div class="tx" style="left:73.05px">Head_J</div></div>
<div class="row" style="top:128.35px"><div class="lk"><svg class="a" style="left:2.9px;top:.3px;width:6.9px;height:8.9px" viewBox="0 0 14 18"><path d="M3.6 9V6a3.4 3.4 0 0 1 6.8 0V9" fill="none" stroke="#7a6810" stroke-width="3.2"/><path d="M3.6 9V6a3.4 3.4 0 0 1 6.8 0V9" fill="none" stroke="#c8a61a" stroke-width="1.9"/><rect x="1.2" y="8" width="11.6" height="8.8" rx="1.4" fill="#c8a61a" stroke="#6e5c0c" stroke-width=".9"/><rect x="2.2" y="9" width="9.6" height="2.2" fill="#dcc040"/><circle cx="7" cy="12" r="1.4" fill="#4a3c06"/><rect x="6.3" y="12" width="1.4" height="3" fill="#4a3c06"/></svg></div><div class="sw" style="background:#7733b3"></div><div class="nm"></div><div class="tx" style="left:80.05px">HeadTop_J</div></div>
<div class="row" style="top:138.60px"><div class="lk"><svg class="a" style="left:2.9px;top:.3px;width:6.9px;height:8.9px" viewBox="0 0 14 18"><path d="M3.6 9V6a3.4 3.4 0 0 1 6.8 0V9" fill="none" stroke="#7a6810" stroke-width="3.2"/><path d="M3.6 9V6a3.4 3.4 0 0 1 6.8 0V9" fill="none" stroke="#c8a61a" stroke-width="1.9"/><rect x="1.2" y="8" width="11.6" height="8.8" rx="1.4" fill="#c8a61a" stroke="#6e5c0c" stroke-width=".9"/><rect x="2.2" y="9" width="9.6" height="2.2" fill="#dcc040"/><circle cx="7" cy="12" r="1.4" fill="#4a3c06"/><rect x="6.3" y="12" width="1.4" height="3" fill="#4a3c06"/></svg></div><div class="sw" style="background:#33aaaa"></div><div class="nm"></div><div class="tri" style="left:59.85px;top:3.9px"></div><div class="tx" style="left:65.55px">R_Clavicle_J</div></div>
<div class="row" style="top:148.85px"><div class="lk"><svg class="a" style="left:2.9px;top:.3px;width:6.9px;height:8.9px" viewBox="0 0 14 18"><path d="M3.6 9V6a3.4 3.4 0 0 1 6.8 0V9" fill="none" stroke="#7a6810" stroke-width="3.2"/><path d="M3.6 9V6a3.4 3.4 0 0 1 6.8 0V9" fill="none" stroke="#c8a61a" stroke-width="1.9"/><rect x="1.2" y="8" width="11.6" height="8.8" rx="1.4" fill="#c8a61a" stroke="#6e5c0c" stroke-width=".9"/><rect x="2.2" y="9" width="9.6" height="2.2" fill="#dcc040"/><circle cx="7" cy="12" r="1.4" fill="#4a3c06"/><rect x="6.3" y="12" width="1.4" height="3" fill="#4a3c06"/></svg></div><div class="sw" style="background:#336fb3"></div><div class="nm"></div><div class="tri" style="left:67.85px;top:3.9px"></div><div class="tx" style="left:73.05px">R_Arm_J</div></div>
<!-- icon row -->
<svg class="a" style="left:65px;top:158.2px;width:132px;height:11.5px" viewBox="0 0 132 11.5"><rect x="1" y="1.2" width="4.6" height="5.6" fill="#d8d8d8"/><rect x="4" y="3.8" width="5" height="6" fill="#eee" stroke="#666" stroke-width=".4"/><path d="M5 5.6h3M5 6.8h3M5 8h3" stroke="#777" stroke-width=".4"/><rect x="16.5" y="1.6" width="6" height="7.6" rx=".6" fill="#c8924a"/><rect x="18.3" y=".8" width="2.4" height="1.6" fill="#888"/><rect x="19.6" y="4" width="5" height="6" fill="#eee" stroke="#666" stroke-width=".4"/><path d="M20.6 5.8h3M20.6 7h3M20.6 8.2h3" stroke="#777" stroke-width=".4"/><path d="M36.9 3.4l1.3 1.2-5 5.4-1.2-1.1z" fill="#c89c48"/><path d="M35.2 2.6l2.2-1.4 3.6 3.2-1.8 2-1.2-1.2-.9-.4z" fill="#141414"/><g fill="#e2cc38"><circle cx="35.6" cy="9.7" r=".7"/><circle cx="37.9" cy="9.7" r=".7"/><circle cx="40.2" cy="9.7" r=".7"/></g><defs><radialGradient id="ball" cx=".38" cy=".32" r=".75"><stop offset="0" stop-color="#cfe6fa"/><stop offset=".5" stop-color="#82b4e2"/><stop offset="1" stop-color="#3f74b4"/></radialGradient></defs><path d="M48.75 3v5M55 3v5M64.5 3v5" stroke="#d4e2f2" stroke-width="1.1"/><g fill="url(#ball)"><circle cx="48.75" cy="2.8" r="2"/><circle cx="55" cy="2.8" r="2"/><circle cx="48.75" cy="8.2" r="2"/><circle cx="55" cy="8.2" r="2"/><circle cx="64.5" cy="2.8" r="2"/><circle cx="64.5" cy="8.2" r="2"/></g><path d="M50.4 5.5h2.9M66.3 5.5h2.6" stroke="#d42424" stroke-width=".9"/><path d="M71.6 2v7.4" stroke="#a89a30" stroke-width=".4" stroke-dasharray=".6 .6"/><g fill="#e6d23c"><circle cx="71.6" cy="1.9" r=".85"/><circle cx="71.6" cy="5.7" r=".85"/><circle cx="71.6" cy="9.4" r=".85"/></g><g fill="#707070"><rect x="110.6" y="1.7" width="1" height=".7"/><rect x="112.4" y="1.7" width="3.8" height=".7"/><rect x="110.6" y="7" width="1" height=".7"/><rect x="112.4" y="7" width="3.8" height=".7"/><rect x="110.6" y="9.1" width="1" height=".7"/><rect x="112.4" y="9.1" width="3.8" height=".7"/></g><path d="M106.9 4.7h3.2" stroke="#e02828" stroke-width="1.2"/><rect x="110.5" y="3.7" width="1.4" height="2" fill="#34b034"/><rect x="112.4" y="3.7" width="3.9" height="2" fill="#4a7cc4"/><path d="M120.7 2.2v7.2" stroke="#e02828" stroke-width=".8"/><path d="M119.8 3l.9-1.4.9 1.4zM119.8 8.6l.9 1.4.9-1.4z" fill="#e02828"/><g fill="#34b034"><rect x="122.5" y="1.2" width="1.4" height="1.6"/><rect x="122.5" y="6" width="1.4" height="1.7"/><rect x="122.5" y="8.6" width="1.4" height="1.5"/></g><g fill="#4a86dc"><rect x="124.4" y="1.2" width="4.7" height="1.6"/><rect x="124.4" y="8.6" width="4.7" height="1.5"/></g><rect x="124.4" y="6" width="4.7" height="1.7" fill="#3e6aa8"/><g fill="#707070"><rect x="122.7" y="3.9" width="1" height=".7"/><rect x="124.4" y="3.9" width="4.6" height=".7"/></g></svg>
<!-- mode rows -->
<div class="lbl" style="left:6.90px;width:70px;top:174.70px">Mode:</div>
<div class="rad" style="left:81.00px;top:175.30px"></div>
<div class="txt" style="left:89.50px;top:174.70px">Paint</div>
<div class="rad" style="left:115.20px;top:175.30px"></div>
<div class="txt" style="left:123.80px;top:174.70px">Select</div>
<div class="rad on" style="left:149.80px;top:175.30px"></div>
<div class="txt" style="left:158.80px;top:174.70px">Paint Select</div>
<div class="lbl" style="left:6.90px;width:70px;top:184.30px">Paint Select:</div>
<div class="rad on" style="left:81.00px;top:184.90px"></div>
<div class="txt" style="left:89.50px;top:184.30px">Add</div>
<div class="rad" style="left:115.20px;top:184.90px"></div>
<div class="txt" style="left:123.80px;top:184.30px">Remove</div>
<div class="rad" style="left:149.80px;top:184.90px"></div>
<div class="txt" style="left:158.80px;top:184.30px">Toggle</div>
<div class="btn" style="left:78px;top:192.1px;width:93px;height:13px;line-height:13.4px">Select Geometry</div>
<div class="lbl" style="left:6.90px;width:70px;top:207.50px">Paint operation:</div>
<div class="rad" style="left:81.00px;top:208.10px"></div>
<div class="txt dis" style="left:89.50px;top:207.50px">Replace</div>
<div class="rad" style="left:149.80px;top:208.10px"></div>
<div class="txt dis" style="left:158.80px;top:207.50px">Add</div>
<div class="rad" style="left:81.00px;top:217.40px"></div>
<div class="txt dis" style="left:89.50px;top:216.80px">Scale</div>
<div class="rad half" style="left:149.80px;top:217.40px"></div>
<div class="txt dis" style="left:158.80px;top:216.80px">Smooth</div>
<!-- profile -->
<div class="lbl" style="left:7.30px;width:70px;top:230.80px">Profile:</div>
<svg class="a" style="left:78px;top:224px;width:118px;height:20px" viewBox="78 224 118 20"><defs><radialGradient id="soft"><stop offset="0" stop-color="#b0dcff"/><stop offset=".4" stop-color="#78b8f4"/><stop offset=".75" stop-color="#3c5068"/><stop offset="1" stop-color="#3a3a3a"/></radialGradient><radialGradient id="soft2"><stop offset="0" stop-color="#9cd0ff"/><stop offset=".72" stop-color="#94caff"/><stop offset="1" stop-color="#3e4650"/></radialGradient></defs><rect x="114.5" y="224.7" width="18.3" height="18.8" fill="#5c8cba"/><circle cx="87" cy="233.9" r="6.55" fill="#3a3a3a" stroke="#962424" stroke-width="1.15"/><circle cx="87" cy="233.9" r="5.6" fill="url(#soft)"/><circle cx="104.8" cy="233.9" r="6.55" fill="#3a3a3a" stroke="#962424" stroke-width="1.15"/><circle cx="104.8" cy="233.9" r="5.5" fill="url(#soft2)"/><circle cx="123.6" cy="233.9" r="6.75" fill="#98ceff" stroke="#a02828" stroke-width=".9"/><circle cx="141.3" cy="233.9" r="6.55" fill="#3a3a3a" stroke="#962424" stroke-width="1.15"/><rect x="137.2" y="229.8" width="8.2" height="8.2" fill="#92c8ff"/><clipPath id="cc"><circle cx="165" cy="233.9" r="6.4"/></clipPath><g clip-path="url(#cc)"><rect x="158" y="226" width="14" height="16" fill="#2428a4"/><path d="M157 242l10.5-12.5 6 4.5v9z" fill="#2e8c22"/><path d="M159.5 242.5l9.5-10.5M162.5 243l8.5-9.5" stroke="#1c5c14" stroke-width=".8"/><ellipse cx="163.6" cy="230.6" rx="2.6" ry="1.5" transform="rotate(-38 163.6 230.6)" fill="#d8d828"/></g><circle cx="165" cy="233.9" r="6.5" fill="none" stroke="#8a2020" stroke-width="1.1"/><path d="M182.3 237.8v-7h3.2l.9 1.1h4.3v5.9z" fill="#cfcfcf"/></svg>
<div class="a" style="left:10.3px;top:244.8px;width:190.4px;height:.6px;background:#5a5a5a"></div>
<!-- weight type -->
<div class="lbl dis" style="left:6.90px;width:70px;top:248.80px">Weight Type:</div>
<div class="a" style="left:81.3px;top:247.6px;width:59.6px;height:7.4px;background:#464646"></div>
<div class="txt dis" style="left:83.50px;top:248.80px">Skin Weight</div>
<div class="tri" style="left:134.6px;top:250.6px;width:4.4px;height:2.4px;background:#999"></div>
<div class="a" style="left:175.5px;top:246.4px;width:10px;height:19.2px;background:#424242"></div>
<div class="lbl" style="left:6.90px;width:70px;top:258.30px">Normalize Weights:</div>
<div class="a" style="left:81.3px;top:257px;width:42.6px;height:8.6px;background:#5d5d5d"></div><div class="a" style="left:113px;top:257px;width:.6px;height:8.6px;background:#444"></div>
<div class="txt" style="color:#eee;left:83.50px;top:258.30px">Interactive</div>
<div class="tri" style="left:116.8px;top:260.1px;width:5px;height:2.6px;background:#eee"></div>
<div class="lbl" style="left:6.90px;width:70px;top:269.50px">Opacity:</div>
<div class="fld" style="left:81.3px;top:267.2px;width:30.8px;height:9.9px;line-height:10.6px">1.0000</div>
<div class="groove" style="left:114.3px;top:270.6px;width:23px"></div><div class="hand" style="left:135.8px;top:268px"></div>
<div class="a" style="left:10.3px;top:278.6px;width:190.4px;height:.6px;background:#5a5a5a"></div>
<div class="lbl" style="left:6.90px;width:70px;top:283.80px">Value:</div>
<div class="fld" style="left:81.3px;top:282px;width:30.8px;height:9.6px;line-height:10px">1.0000</div>
<div class="groove" style="left:114.3px;top:285.1px;width:23px"></div><div class="hand" style="left:135.8px;top:282.6px"></div>
<svg class="a" style="left:176.5px;top:282.6px;width:9px;height:8px" viewBox="0 0 9 8"><path d="M1 7.2l4-4.2" stroke="#ddd" stroke-width=".9"/><path d="M4.6 3.6l2.6-2.8 1 1-2.6 2.8z" fill="#222" stroke="#bbb" stroke-width=".3"/></svg>
<div class="lbl" style="left:6.90px;width:70px;top:296.30px">Min/Max value:</div>
<div class="fld" style="left:81.3px;top:294.4px;width:30.8px;height:9.4px;line-height:9.8px">0.0000</div>
<div class="fld" style="left:114.3px;top:294.4px;width:31.2px;height:9.4px;line-height:9.8px;padding-left:3.4px">1.0000</div>
<div class="btn" style="left:78px;top:304.8px;width:93px;height:13px;line-height:13.6px">Flood</div>
<!-- gradient section -->
<div class="hdr" style="top:318.9px;height:9.2px"><div class="tri" style="left:3.4px;top:3.5px;width:4.6px;height:2.6px;background:#eee"></div><span>Gradient</span></div>
<div class="lbl" style="left:5.60px;width:70px;top:330.20px">Use Color Ramp</div>
<div class="a" style="left:80.5px;top:329.8px;width:6.5px;height:6.6px;background:#2b2b2b"></div><svg class="a" style="left:80.5px;top:329.8px;width:6.5px;height:6.5px" viewBox="0 0 6.5 6.5"><path d="M1.4 3.4l1.3 1.6 2.6-3.6" fill="none" stroke="#eee" stroke-width=".9"/></svg>
<div class="lbl" style="left:-9.80px;width:70px;top:352.30px">Weight Color:</div>
<div class="a" style="left:64px;top:346.3px;width:17.5px;height:15.8px;background:#000"></div>
<div class="a" style="left:166.5px;top:346.3px;width:17.8px;height:15.8px;background:#fff"></div>
<svg class="a" style="left:83.1px;top:339px;width:82px;height:30px" viewBox="83.1 339 82 30"><defs><linearGradient id="ramp" x1="0" x2="1" y1="0" y2="0"><stop offset="0" stop-color="#0a22d8"/><stop offset=".2" stop-color="#0c7a8c"/><stop offset=".4" stop-color="#22c81c"/><stop offset=".6" stop-color="#dcdc18"/><stop offset=".8" stop-color="#e4801a"/><stop offset="1" stop-color="#d01c1c"/></linearGradient><linearGradient id="rampsh" x1="0" x2="0" y1="0" y2="1"><stop offset="0" stop-color="#000" stop-opacity=".3"/><stop offset=".3" stop-color="#000" stop-opacity="0"/><stop offset=".75" stop-color="#000" stop-opacity="0"/><stop offset="1" stop-color="#000" stop-opacity=".4"/></linearGradient></defs><rect x="83.1" y="339" width="82" height="30" fill="#464646"/><rect x="88" y="351" width="71.8" height="6.7" fill="url(#ramp)"/><rect x="88" y="351" width="71.8" height="6.7" fill="url(#rampsh)"/><g stroke="#333" stroke-width=".4"><circle cx="88.4" cy="347.9" r="2.5" fill="#0000f0"/><circle cx="116.8" cy="347.9" r="2.5" fill="#00f000"/><circle cx="131" cy="347.9" r="2.5" fill="#f8f800"/><circle cx="145.2" cy="347.9" r="2.5" fill="#ff8800"/></g><circle cx="159.5" cy="347.9" r="2.5" fill="#ff0000" stroke="#f0d0d0" stroke-width=".7"/><g stroke="#333" stroke-width=".4"><rect x="86.1" y="360" width="4.6" height="4.6" rx=".6" fill="#0000c0"/><rect x="114.5" y="360" width="4.6" height="4.6" rx="1.6" fill="#00b000"/><rect x="128.7" y="360" width="4.6" height="4.6" rx="1.6" fill="#c0c000"/><rect x="142.9" y="360" width="4.6" height="4.6" rx="1.6" fill="#c06800"/></g><circle cx="116.8" cy="362.3" r="1.3" fill="#00e800"/><circle cx="131" cy="362.3" r="1.3" fill="#f0f000"/><circle cx="145.2" cy="362.3" r="1.3" fill="#f08000"/><circle cx="88.4" cy="362.3" r="1.2" fill="#0000e8"/><rect x="157.2" y="360" width="4.6" height="4.6" rx=".6" fill="#e81c1c" stroke="#f0b8b8" stroke-width=".6"/><circle cx="159.5" cy="362.3" r="1.2" fill="#ff0000" stroke="#f8b0b0" stroke-width=".4"/></svg>
<div class="lbl" style="left:6.60px;width:70px;top:373.80px">Selected Color:</div>
<div class="a" style="left:80.5px;top:373px;width:31.5px;height:7.6px;background:#fb0505"></div>
<div class="groove" style="left:114.3px;top:375px;width:31.6px"></div><div class="hand" style="left:144.2px;top:373px;width:3.1px;height:7.6px"></div>
<div class="lbl" style="left:5.80px;width:70px;top:392.20px">Color presets:</div>
<div class="a" style="left:81.3px;top:390.5px;width:8.8px;height:9.6px;border-radius:1.2px;background:linear-gradient(90deg,#000 0,#e00000 45%,#ffb000 80%,#ffff60 100%)"></div>
<div class="a" style="left:93px;top:390.5px;width:9.2px;height:9.6px;border-radius:1.2px;background:linear-gradient(90deg,#0000d0 0,#0060e0 25%,#00d000 50%,#f0f000 75%,#ff6000 100%)"></div>
<div class="a" style="left:105px;top:390.5px;width:9.2px;height:9.6px;border-radius:1.2px;background:linear-gradient(90deg,#000 0,#000 20%,#fff 85%,#fff 100%)"></div>
<div class="hdr" style="top:401.6px;height:9.3px"><div class="a" style="left:3.6px;top:1.7px;width:2.8px;height:4.6px;background:#eee;clip-path:polygon(0 0,100% 50%,0 100%);margin-top:.5px"></div><span>Stroke</span></div>
<div class="hdr" style="top:411.7px;height:9.3px"><div class="a" style="left:3.6px;top:1.7px;width:2.8px;height:4.6px;background:#eee;clip-path:polygon(0 0,100% 50%,0 100%);margin-top:.5px"></div><span>Stylus Pressure</span></div>
<div class="hdr" style="top:422.1px;height:9.5px"><div class="a" style="left:3.6px;top:1.7px;width:2.8px;height:4.6px;background:#eee;clip-path:polygon(0 0,100% 50%,0 100%);margin-top:.5px"></div><span>Display</span></div>
<!-- scrollbars -->
<div class="a" style="left:10.3px;top:432.6px;width:190.2px;height:6px;background:#3b3b3b"></div>
<div class="a" style="left:200.8px;top:426.8px;width:6.8px;height:12.6px;background:#555"></div>

<div class="a" style="left:14.8px;top:432.9px;width:157.4px;height:6px;border-radius:2px;background:#5d5d5d"></div>
<div class="a" style="left:10.8px;top:433.6px;width:2.8px;height:4.6px;background:#ddd;clip-path:polygon(100% 0,0 50%,100% 100%)"></div>
<div class="a" style="left:195.8px;top:433.6px;width:2.8px;height:4.6px;background:#ddd;clip-path:polygon(0 0,100% 50%,0 100%)"></div>

<div class="a" style="left:200.8px;top:72.6px;width:5.1px;height:353.8px;border-radius:1.8px;background:#5d5d5d"></div>
<div class="a" style="left:201.6px;top:39.6px;width:5px;height:3px;background:#ddd;clip-path:polygon(50% 0,100% 100%,0 100%)"></div>
<div class="a" style="left:201.7px;top:428.4px;width:4px;height:2.5px;background:#e4e4e4;clip-path:polygon(0 0,100% 0,50% 100%)"></div>

</div>
</div>
</div>
</body>
</html>
